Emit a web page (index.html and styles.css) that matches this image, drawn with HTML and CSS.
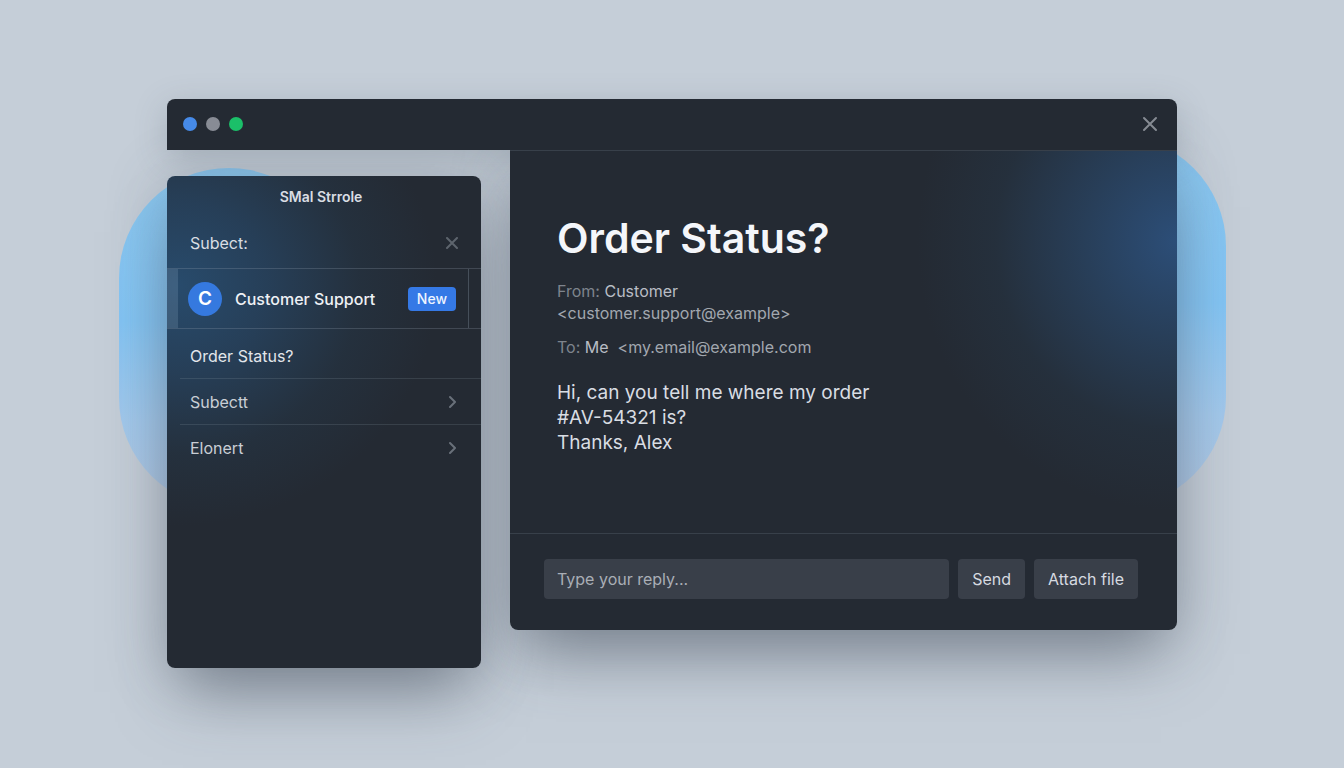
FILE: index.html
```html
<!DOCTYPE html>
<html lang="en">
<head>
    <meta charset="UTF-8">
    <meta name="viewport" content="width=device-width, initial-scale=1.0">
    <title>Order Status?</title>
    <link rel="stylesheet" href="styles.css">
</head>
<body>
    <div class="window">
        <div class="blob blob-left"></div>
        <div class="blob blob-right"></div>

        <header class="titlebar">
            <div class="dots">
                <span class="dot blue"></span>
                <span class="dot gray"></span>
                <span class="dot green"></span>
            </div>
            <button type="button" class="icon-btn close" aria-label="Close window">
                <svg width="16" height="16" viewBox="0 0 16 16"><path d="M2 2l12 12M14 2L2 14"/></svg>
            </button>
        </header>

        <div class="panes">
            <aside class="sidebar">
                <h2 class="sidebar-title">SMal Strrole</h2>
                <div class="subject">
                    <span>Subect:</span>
                    <button type="button" class="icon-btn clear" aria-label="Clear subject">
                        <svg width="12" height="12" viewBox="0 0 12 12"><path d="M1 1l10 10M11 1L1 11"/></svg>
                    </button>
                </div>
                <div class="selected">
                    <a href="#" class="message">
                        <span class="avatar">C</span>
                        <span class="sender">Customer Support</span>
                        <span class="badge">New</span>
                    </a>
                </div>
                <nav class="list">
                    <a href="#" class="row current">Order Status?</a>
                    <a href="#" class="row">Subectt
                        <svg width="8" height="14" viewBox="0 0 8 14"><path d="M1 2l5 5-5 5"/></svg>
                    </a>
                    <a href="#" class="row">Elonert
                        <svg width="8" height="14" viewBox="0 0 8 14"><path d="M1 2l5 5-5 5"/></svg>
                    </a>
                </nav>
            </aside>

            <main class="mail">
                <article class="content">
                    <h1>Order Status?</h1>
                    <p class="meta"><span class="label">From:</span> <span class="name">Customer</span><br>&lt;customer.support@example&gt;</p>
                    <p class="meta"><span class="label">To:</span> <span class="name">Me</span>&nbsp; &lt;my.email@example.com</p>
                    <p class="text">Hi, can you tell me where my order<br>#AV-54321 is?<br>Thanks, Alex</p>
                </article>
                <form class="reply">
                    <input type="text" aria-label="Reply" placeholder="Type your reply...">
                    <button type="button">Send</button>
                    <button type="button">Attach file</button>
                </form>
            </main>
        </div>
    </div>
</body>
</html>
```
FILE: styles.css
```css
* {
    box-sizing: border-box;
}

body {
    margin: 0;
    min-height: 100vh;
    padding: 99px 24px 40px;
    background-color: #c5ced8;
    font-family: Inter, "Liberation Sans", sans-serif;
    font-size: 16px;
    color: #d9dde3;
}

h1, h2, p {
    margin: 0;
}

a {
    color: inherit;
    text-decoration: none;
}

svg {
    display: block;
    fill: none;
    stroke: currentColor;
    stroke-linecap: round;
    stroke-linejoin: round;
}

.window {
    position: relative;
    z-index: 0;
    max-width: 1010px;
    margin: 0 auto;
}

/* blue shapes behind the window */
.blob {
    position: absolute;
    z-index: -2;
    width: 220px;
    border-radius: 110px;
    background: linear-gradient(#8cc8f0, #84c5f4 45%, #a3c9ec 75%, #b0c8e4);
}

.blob-left {
    left: -48px;
    top: 69px;
    height: 340px;
}

.blob-right {
    right: -49px;
    top: 37px;
    height: 371px;
}

.titlebar,
.sidebar,
.mail {
    position: relative;
}

/* shadows sit under every pane, so no pane darkens its neighbour */
.titlebar::before,
.sidebar::before,
.mail::before {
    content: "";
    position: absolute;
    inset: 0;
    z-index: -1;
    border-radius: 8px;
}

.titlebar::before {
    box-shadow: 0 8px 32px rgba(80, 90, 102, 0.25);
}

.sidebar::before,
.mail::before {
    box-shadow: 0 40px 60px -16px rgba(72, 82, 95, 0.5), 0 4px 60px rgba(80, 90, 102, 0.3);
}

.titlebar {
    display: flex;
    align-items: center;
    justify-content: space-between;
    height: 51px;
    padding: 0 18px 1px 16px;
    border-radius: 8px 8px 0 0;
    background-color: #242a33;
}

.dots {
    display: flex;
    gap: 9px;
}

.dot {
    width: 14px;
    height: 14px;
    border-radius: 50%;
}

.blue {
    background-color: #468ae8;
}

.gray {
    background-color: #888c95;
}

.green {
    background-color: #1bbf69;
}

.icon-btn {
    padding: 1px;
    border: none;
    background: none;
    cursor: pointer;
}

.close {
    color: #868b93;
    stroke-width: 2;
}

.clear {
    color: #5d646d;
    stroke-width: 2;
}

.panes {
    display: flex;
    align-items: flex-start;
    gap: 29px;
}

/* sidebar */
.sidebar {
    flex: 0 0 314px;
    min-height: 492px;
    margin-top: 26px;
    border-radius: 8px;
    background: radial-gradient(260px 240px at 10px 110px, #284b6c, rgba(39, 68, 97, 0.8) 35%, rgba(37, 56, 74, 0.45) 70%, rgba(36, 42, 51, 0)) #242a33;
}

.sidebar-title {
    padding: 11px 6px 12px 0;
    font-size: 14px;
    font-weight: 600;
    line-height: 20px;
    text-align: center;
}

.subject {
    display: flex;
    align-items: center;
    justify-content: space-between;
    height: 49px;
    padding: 0 22px 1px 23px;
}

.selected {
    padding-right: 12px;
    border: 1px solid rgba(150, 165, 180, 0.25);
    border-width: 1px 0;
}

.message {
    display: flex;
    align-items: center;
    height: 59px;
    padding: 0 12px 0 10px;
    border-left: 11px solid rgba(150, 180, 205, 0.2);
    border-right: 1px solid rgba(150, 165, 180, 0.3);
}

.avatar {
    width: 34px;
    height: 34px;
    border-radius: 50%;
    background-color: #3579df;
    color: #fff;
    font-size: 19px;
    font-weight: 600;
    line-height: 34px;
    text-align: center;
}

.sender {
    flex: 1;
    padding-left: 13px;
    color: #eef1f5;
    font-weight: 500;
    white-space: nowrap;
}

.badge {
    padding: 0 9px;
    border-radius: 4px;
    background-color: #3579e6;
    color: #eef4ff;
    font-size: 14px;
    font-weight: 500;
    line-height: 24px;
}

.list {
    padding-left: 13px;
}

.row {
    display: flex;
    align-items: center;
    justify-content: space-between;
    height: 46px;
    padding: 0 24px 0 10px;
    border-bottom: 1px solid rgba(150, 165, 180, 0.18);
    color: #c9ced5;
}

.row:last-child {
    border-bottom: none;
}

.row svg {
    color: #69707a;
    stroke-width: 2;
}

.current {
    height: 50px;
    padding-top: 4px;
    color: #e2e6eb;
}

/* opened mail */
.mail {
    flex: 1;
    border-top: 1px solid #38404a;
    border-radius: 0 0 8px 8px;
    background: radial-gradient(260px 270px at 100% 90px, #2c4e78, rgba(41, 68, 99, 0.8) 35%, rgba(38, 56, 74, 0.4) 70%, rgba(36, 42, 51, 0)) #242a33;
}

.content {
    min-height: 382px;
    padding: 62px 47px 40px;
}

h1 {
    margin-bottom: 17px;
    color: #f4f6fa;
    font-size: 41px;
    font-weight: 600;
    line-height: 50px;
}

.meta {
    margin-bottom: 12px;
    color: #a2a7af;
    line-height: 22px;
}

.label {
    color: #7e848d;
}

.name {
    color: #b9bdc5;
}

.text {
    padding-top: 10px;
    font-size: 19px;
    line-height: 25px;
}

.reply {
    display: flex;
    gap: 9px;
    padding: 25px 39px 31px 34px;
    border-top: 1px solid #38404a;
}

.reply input,
.reply button {
    height: 40px;
    border: none;
    border-radius: 4px;
    background-color: #393f49;
    color: #d6dae0;
    font-family: inherit;
    font-size: 16px;
}

.reply input {
    flex: 1;
    min-width: 0;
    padding: 0 13px;
}

.reply input::placeholder {
    color: #a9aeb6;
}

.reply button {
    padding: 0 14px;
    cursor: pointer;
}
```
